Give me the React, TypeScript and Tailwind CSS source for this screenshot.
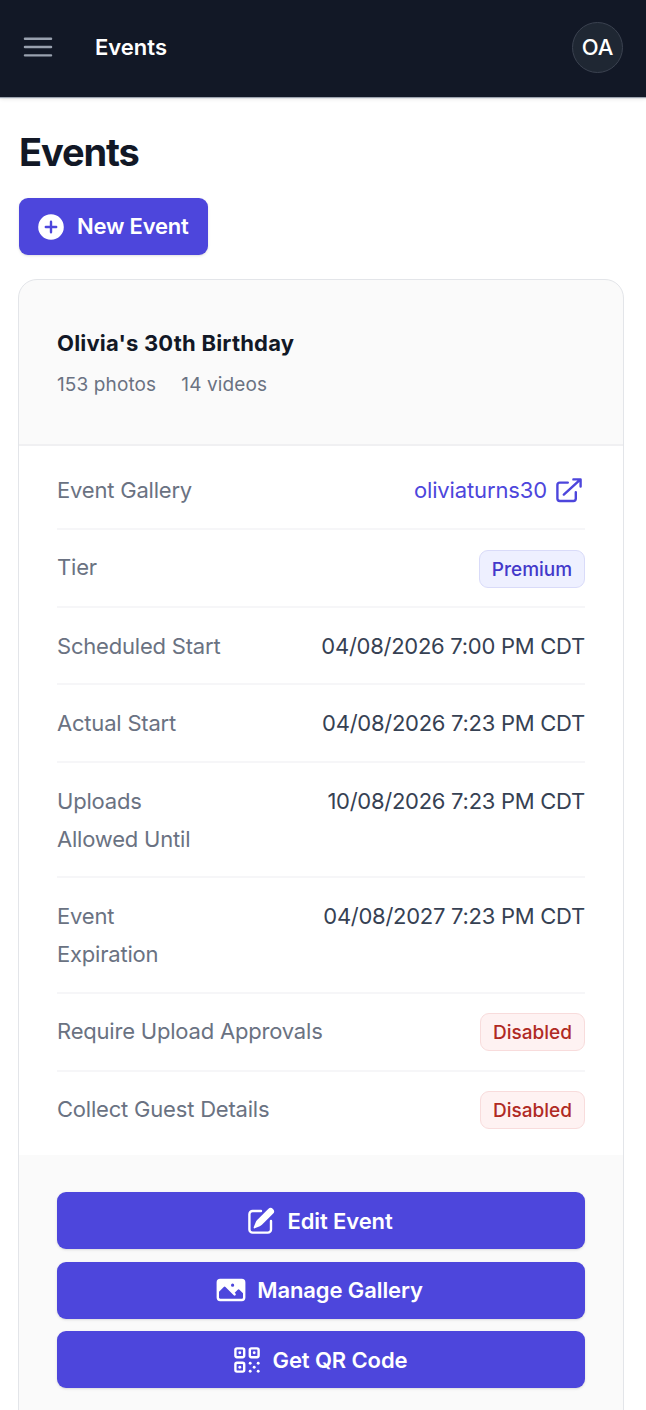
import React from 'react';
import {
  HiMiniArrowTopRightOnSquare,
  HiMiniPencilSquare,
  HiMiniPhoto,
  HiMiniPlusCircle,
  HiOutlineBars3,
} from 'react-icons/hi2';

function QrCodeIcon({ className }: { className: string }) {
  const corners = [
    [2.75, 2.75],
    [11.75, 2.75],
    [2.75, 11.75],
  ];
  const dots = [
    [12, 12],
    [17, 12],
    [14.5, 14.5],
    [12, 17],
    [17, 17],
  ];

  return (
    <svg viewBox="0 0 20 20" className={className} aria-hidden="true">
      {corners.map(([x, y]) => (
        <g key={`${x}-${y}`}>
          <rect x={x} y={y} width="5.5" height="5.5" rx="1" fill="none" stroke="currentColor" strokeWidth="1.5" />
          <circle cx={x + 2.75} cy={y + 2.75} r="0.9" fill="currentColor" />
        </g>
      ))}
      {dots.map(([x, y]) => (
        <circle key={`${x}-${y}`} cx={x} cy={y} r="0.9" fill="currentColor" />
      ))}
    </svg>
  );
}

interface DetailRowProps {
  label: string;
  className: string;
  labelClassName?: string;
  children: React.ReactNode;
}

function DetailRow({ label, className, labelClassName = '', children }: DetailRowProps) {
  return (
    <div className={`flex items-start justify-between border-[#f6f6f8] ${className}`}>
      <dt className={`tracking-[-0.2px] text-gray-500 ${labelClassName}`}>{label}</dt>
      <dd className="whitespace-nowrap tracking-[-0.27px] text-gray-700">{children}</dd>
    </div>
  );
}

function DisabledBadge() {
  return (
    <span className="flex h-[38px] w-[105px] items-center justify-center rounded-[9px] border border-[#f8dcdc] bg-[#fef2f2] pt-px text-[19px] font-medium tracking-[0.03px] text-[#b02a24]">
      Disabled
    </span>
  );
}

interface ActionButtonProps {
  icon: React.ReactNode;
  label: string;
}

function ActionButton({ icon, label }: ActionButtonProps) {
  return (
    <button
      type="button"
      className="flex h-[57px] w-full items-center justify-center gap-[10px] rounded-[9px] bg-[#4d46dc] pr-[4px] font-semibold tracking-[-0.1px] text-white shadow-sm"
    >
      {icon}
      <span className="pt-[2px]">{label}</span>
    </button>
  );
}

export default function App() {
  return (
    <div className="h-[1410px] overflow-hidden bg-white font-['Inter',sans-serif] text-[22px] leading-[37.75px]">
      <header className="flex h-[97px] items-center bg-[#121826] pb-[3px] pl-[19px] pr-[23px] shadow-[0_1px_1px_#9ca3af,0_2px_4px_#0000001a]">
        <button type="button" aria-label="Open menu" className="text-gray-400">
          <HiOutlineBars3 className="size-[38px]" />
        </button>
        <div className="ml-[38px] flex-1 pt-[2px] font-semibold text-white">Events</div>
        <div className="flex size-[51px] items-center justify-center rounded-full border border-[#3b4250] bg-[#1f2733] pt-px font-medium text-white">
          OA
        </div>
      </header>

      <main className="px-[18px] pt-[30px]">
        <h1 className="pl-px text-[38px] font-bold leading-[50px] tracking-[-1.1px] text-[#121826]">Events</h1>
        <button
          type="button"
          className="ml-px mt-[21px] flex h-[57px] w-[189px] items-center gap-[10px] rounded-[9px] bg-[#4d46dc] pl-[16px] font-semibold tracking-[-0.2px] text-white shadow-sm"
        >
          <HiMiniPlusCircle className="size-[32px]" />
          <span>New Event</span>
        </button>

        <section className="mt-[24px] h-[1200px] w-[606px] overflow-hidden rounded-[19px] border border-[#e3e5e9] bg-[#fafafa]">
          <div className="h-[166px] border-b-2 border-[#f0f0f2] px-[38px] pt-[45px]">
            <h2 className="font-bold tracking-[0.2px] text-[#121826]">Olivia's 30th Birthday</h2>
            <div className="mt-[5px] flex gap-[25px] text-[19px] leading-[34px] tracking-[0.12px] text-gray-500">
              <span>153 photos</span>
              <span>14 videos</span>
            </div>
          </div>

          <dl className="h-[709px] bg-white px-[38px]">
            <DetailRow label="Event Gallery" className="h-[84px] border-b-2 pt-[26px]">
              <a href="#" className="flex items-center gap-[6px] tracking-[-0.13px] text-[#4d46dc]">
                oliviaturns30
                <HiMiniArrowTopRightOnSquare className="size-[32px]" />
              </a>
            </DetailRow>
            <DetailRow label="Tier" className="h-[78px] border-b-2 pt-[19px]">
              <span className="mt-px flex h-[38px] w-[106px] items-center justify-center rounded-[9px] border border-[#d9dbf9] bg-[#eef0ff] pt-px text-[19px] font-medium tracking-normal text-[#4338ca]">
                Premium
              </span>
            </DetailRow>
            <DetailRow label="Scheduled Start" className="h-[77px] border-b-2 pt-[20px]">
              04/08/2026 7:00 PM CDT
            </DetailRow>
            <DetailRow label="Actual Start" className="h-[78px] border-b-2 pt-[20px]">
              04/08/2026 7:23 PM CDT
            </DetailRow>
            <DetailRow label="Uploads Allowed Until" labelClassName="w-[150px]" className="h-[115px] border-b-2 pt-[20px]">
              10/08/2026 7:23 PM CDT
            </DetailRow>
            <DetailRow label="Event Expiration" labelClassName="w-[130px]" className="h-[116px] border-b-2 pt-[20px]">
              04/08/2027 7:23 PM CDT
            </DetailRow>
            <DetailRow label="Require Upload Approvals" className="h-[78px] border-b-2 pt-[19px]">
              <DisabledBadge />
            </DetailRow>
            <DetailRow label="Collect Guest Details" className="h-[78px] pt-[19px]">
              <DisabledBadge />
            </DetailRow>
          </dl>

          <div className="flex flex-col gap-[12.5px] px-[38px] pt-[37px]">
            <ActionButton icon={<HiMiniPencilSquare className="size-[32px]" />} label="Edit Event" />
            <ActionButton icon={<HiMiniPhoto className="size-[32px]" />} label="Manage Gallery" />
            <ActionButton icon={<QrCodeIcon className="size-[32px]" />} label="Get QR Code" />
          </div>
        </section>
      </main>
    </div>
  );
}
